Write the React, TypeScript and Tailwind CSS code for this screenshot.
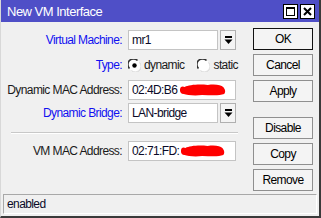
import React from 'react';

const font = { fontFamily: '"Liberation Sans Narrow", "Liberation Sans", Arial, sans-serif' };

function DropArrow() {
  return (
    <svg width="9" height="9" viewBox="0 0 9 9">
      <rect x="1" y="0" width="7" height="2" fill="#000" />
      <path d="M0.5 3.5 H8.5 L4.5 8 Z" fill="#000" />
    </svg>
  );
}

function Radio({ checked }: { checked: boolean }) {
  return (
    <svg width="13" height="13" viewBox="0 0 13 13">
      <circle cx="6.5" cy="6.5" r="6" fill="#fff" />
      <path d="M1.5 9.5 A5.5 5.5 0 0 1 9.5 1.5" stroke="#333" strokeWidth="1.6" fill="none" />
      <path d="M11.5 3.5 A5.5 5.5 0 0 1 3.5 11.5" stroke="#d8d8d8" strokeWidth="1" fill="none" />
      {checked && <circle cx="6.5" cy="6.5" r="2.2" fill="#000" />}
    </svg>
  );
}

function Blot({ w }: { w: number }) {
  return (
    <svg width={w} height="14" viewBox="0 0 50 14" preserveAspectRatio="none">
      <path
        d="M1 7 C1 3 4 3 6 4 C10 2 20 1 30 2 C38 1 44 2 46 4 C48 6 49 9 47 11 C42 13 32 12 24 12 C16 13 8 12 5 11 C2 11 1 9 1 7 Z"
        fill="#ff0000"
      />
    </svg>
  );
}

function Label({ children, blue }: { children: React.ReactNode; blue?: boolean }) {
  return (
    <div className={`w-[121px] text-right shrink-0 whitespace-nowrap ${blue ? 'text-[#1010f0]' : 'text-[#1a1a1a]'}`}>
      {children}
    </div>
  );
}

function Field({ children, w }: { children: React.ReactNode; w: string }) {
  return (
    <div className={`${w} h-[20px] bg-white border border-[#c4c4c4] flex items-center pl-[3px] text-[#0a0a28] overflow-hidden whitespace-nowrap`}>
      {children}
    </div>
  );
}

function DropBtn() {
  return (
    <div className="w-[16px] h-[20px] ml-[2px] bg-[#f4f4f4] border border-[#b0b0b0] flex items-center justify-center">
      <DropArrow />
    </div>
  );
}

function Btn({ children, def }: { children: React.ReactNode; def?: boolean }) {
  return (
    <div
      className={`w-[60px] h-[22px] flex items-center justify-center bg-[#f4f4f4] text-black border ${
        def ? 'border-[#111]' : 'border-[#8f8f8f]'
      }`}
    >
      {children}
    </div>
  );
}

export default function App() {
  return (
    <div style={font} className="w-[321px] h-[218px] bg-[#f0f0f0] flex flex-col text-[12px] tracking-[-0.6px] leading-none border-l border-[#d8d8d8] border-r-2 border-b-2 border-r-[#3a3a3a] border-b-[#3a3a3a] overflow-hidden">
      {/* Title bar */}
      <div className="h-[22px] bg-[#4f4fc7] flex items-center justify-between pl-[6px] pr-[4px] shrink-0">
        <span className="text-white text-[13px] tracking-[-0.5px]">New VM Interface</span>
        <div className="flex gap-[2px]">
          <div className="w-[15px] h-[15px] bg-white border border-black flex items-center justify-center">
            <div className="w-[9px] h-[9px] border border-black border-t-2" />
          </div>
          <div className="w-[15px] h-[15px] bg-white border border-black flex items-center justify-center">
            <svg width="9" height="9" viewBox="0 0 9 9">
              <path d="M1 1 L8 8 M8 1 L1 8" stroke="#000" strokeWidth="2" />
            </svg>
          </div>
        </div>
      </div>

      {/* Body */}
      <div className="flex flex-1">
        <div className="w-[250px] pt-[8px] flex flex-col">
          <div className="flex items-center gap-[6px] h-[20px]">
            <Label blue>Virtual Machine:</Label>
            <div className="flex">
              <Field w="w-[90px]">mr1</Field>
              <DropBtn />
            </div>
          </div>
          <div className="flex items-center gap-[6px] h-[20px] mt-[5px]">
            <Label blue>Type:</Label>
            <div className="flex items-center text-[#1a1a1a]">
              <Radio checked />
              <span className="ml-[3px]">dynamic</span>
              <span className="ml-[13px] flex"><Radio checked={false} /></span>
              <span className="ml-[3px]">static</span>
            </div>
          </div>
          <div className="flex items-center gap-[6px] h-[20px] mt-[5px]">
            <Label>Dynamic MAC Address:</Label>
            <Field w="w-[108px]">
              <span>02:4D:B6</span>
              <span className="ml-[2px] flex"><Blot w={48} /></span>
            </Field>
          </div>
          <div className="flex items-center gap-[6px] h-[20px] mt-[3px]">
            <Label blue>Dynamic Bridge:</Label>
            <div className="flex">
              <Field w="w-[90px]">LAN-bridge</Field>
              <DropBtn />
            </div>
          </div>
          <div className="ml-[10px] w-[227px] mt-[9px] border-t border-[#c8c8c8] border-b border-b-white" />
          <div className="flex items-center gap-[6px] h-[20px] mt-[7px]">
            <Label>VM MAC Address:</Label>
            <Field w="w-[108px]">
              <span>02:71:FD:</span>
              <span className="ml-[1px] flex"><Blot w={46} /></span>
            </Field>
          </div>
        </div>

        <div className="pt-[6px] ml-[2px] flex flex-col gap-[4px]">
          <Btn def>OK</Btn>
          <Btn>Cancel</Btn>
          <Btn>Apply</Btn>
          <div className="h-[7px]" />
          <Btn>Disable</Btn>
          <Btn>Copy</Btn>
          <Btn>Remove</Btn>
        </div>
      </div>

      {/* Status bar */}
      <div className="h-[20px] mx-[2px] mb-[2px] border border-[#a8a8a8] border-r-white border-b-white flex items-center pl-[3px] text-[#0a0a28] shrink-0">
        enabled
      </div>
    </div>
  );
}
